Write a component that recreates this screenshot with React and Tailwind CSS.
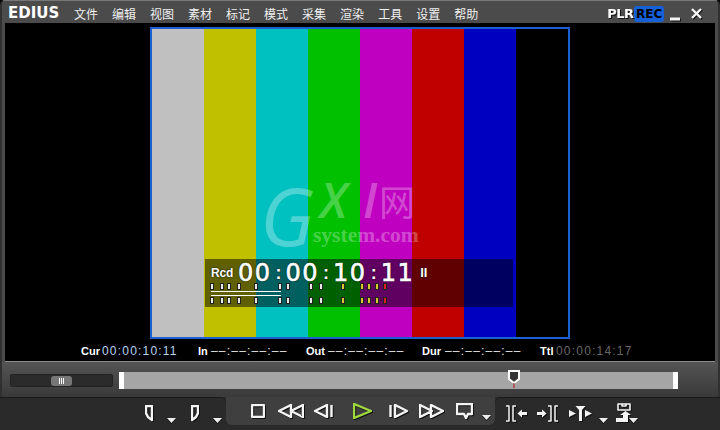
import React from "react";

const menus = ["文件", "编辑", "视图", "素材", "标记", "模式", "采集", "渲染", "工具", "设置", "帮助"];
const bars = ["bg-[#c0c0c0]", "bg-[#c0c000]", "bg-[#00c0c0]", "bg-[#00c000]", "bg-[#c000c0]", "bg-[#c00000]", "bg-[#0000c0]", "bg-black"];
const digits = ["00", "00", "10", "11"];
const ticks = [0, 10, 17, 27, 44, 68, 76, 99, 109, 131, 150, 157, 165, 173];
const stats = [
  { label: "In", width: "w-[108px]", labelWidth: "w-[13px]" },
  { label: "Out", width: "w-[116px]", labelWidth: "w-[22px]" },
  { label: "Dur", width: "w-[118px]", labelWidth: "w-[23px]" },
];

// white line icon with the little dark shadow every button has in the reference
function Icon({ w, h, className = "", color = "#f4f4f4", sw = 2.4, children }) {
  return (
    <svg
      width={w}
      height={h}
      viewBox={`0 0 ${w} ${h}`}
      fill="none"
      stroke={color}
      strokeWidth={sw}
      strokeLinejoin="round"
      className={`shrink-0 drop-shadow-[1px_1px_0_#111] ${className}`}
    >
      {children}
    </svg>
  );
}

function Caret({ className = "" }) {
  return (
    <svg width="9" height="5" viewBox="0 0 9 5" className={`shrink-0 self-end mb-[5px] drop-shadow-[0_1px_0_#111] ${className}`}>
      <path d="M0 0H9L4.5 5Z" fill="#eee" />
    </svg>
  );
}

function Meter() {
  return (
    <div className="relative h-[5px] w-[180px]">
      {ticks.map((x, i) => (
        <span
          key={i}
          style={{ left: x }}
          className={`absolute top-0 h-[5px] w-[2px] shadow-[0_0_0_1px_#222] ${i > 12 ? "bg-[#e02020]" : i > 8 ? "bg-[#d8c830]" : "bg-[#e8e8e8]"}`}
        />
      ))}
    </div>
  );
}

function Overlay() {
  return (
    <div className="absolute left-[53px] top-[230px] flex h-[48px] w-[308px] flex-col bg-black/50 pl-[6px] pt-[2px] text-white">
      <div className="flex h-[23px] items-center [text-shadow:0_0_2px_#000]">
        <span className="mr-[4px] w-[23px] text-[12px] font-bold leading-none tracking-[-0.2px]">Rcd</span>
        {digits.map((d, i) => (
          <React.Fragment key={i}>
            <span className="text-[24px] leading-none tracking-[1.5px] [-webkit-text-stroke:0.6px_white] [font-family:'DejaVu_Sans',sans-serif]">{d}</span>
            {i < 3 && <span className="mx-[4px] text-[18px] font-bold leading-none">:</span>}
          </React.Fragment>
        ))}
        <span className="ml-[6px] text-[13px] font-bold leading-none">II</span>
      </div>
      <Meter />
      <div className="mt-[2px] flex h-[5px] w-[70px] flex-col justify-between">
        <span className="h-[1px] bg-white" />
        <span className="h-[1px] bg-white" />
      </div>
      <div className="mt-[2px]">
        <Meter />
      </div>
    </div>
  );
}

function Watermark() {
  return (
    <div className="absolute left-[113px] top-[153px] h-[70px] w-[160px] text-white/30">
      <span className="absolute left-[-5px] top-[0px] text-[80px] font-medium italic leading-[66px] [font-family:'Open_Sans',sans-serif]">G</span>
      <span className="absolute left-[55px] top-[0px] text-[48px] font-semibold italic leading-[36px] [font-family:'Open_Sans',sans-serif]">X</span>
      <span className="absolute left-[98px] top-[0px] text-[48px] font-semibold italic leading-[36px] [font-family:'Open_Sans',sans-serif]">I</span>
      <span className="absolute left-[114px] top-[0px] text-[36px] leading-[36px] [font-family:'Noto_Sans_CJK_SC',sans-serif]">网</span>
      <span className="absolute left-[48px] top-[43px] whitespace-nowrap text-[21.5px] font-bold leading-[20px] [font-family:'Liberation_Serif',serif]">system.com</span>
    </div>
  );
}

function Stat({ label, width, labelWidth, time = "––:––:––:––", timeClass = "text-[#e4e4e4]" }) {
  return (
    <div className={`flex items-baseline ${width}`}>
      <span className={`text-[11px] font-bold text-white ${labelWidth}`}>{label}</span>
      <span className={`text-[12px] tracking-[1.2px] ${timeClass}`}>{time}</span>
    </div>
  );
}

export default function App() {
  return (
    <div className="flex h-[430px] w-[720px] flex-col overflow-hidden bg-black [font-family:'Liberation_Sans',sans-serif]">
      <div className="flex h-[397px] flex-col rounded-t-[5px] border-x-2 border-t border-x-[#303030] border-t-[#777] bg-[#4b4b4b]">
        {/* title bar */}
        <div className="flex h-[22px] shrink-0 items-center pl-[6px] pt-[3px] text-white">
          <span className="w-[66px] text-[15px] font-bold leading-none [font-family:'DejaVu_Sans',sans-serif]">EDIUS</span>
          <div className="flex gap-[14px] text-[12px] text-[#f0f0f0] [font-family:'Noto_Sans_CJK_SC',sans-serif]">
            {menus.map((m) => (
              <span key={m}>{m}</span>
            ))}
          </div>
          <span className="ml-[129px] w-[27px] text-[13px] font-bold leading-none tracking-[-0.5px] drop-shadow-[1px_1px_0_#111] [font-family:'DejaVu_Sans',sans-serif]">PLR</span>
          <span className="flex h-[16px] w-[30px] items-center justify-center rounded-[3px] bg-[#1660d8] text-[12px] font-bold leading-none text-black [font-family:'DejaVu_Sans',sans-serif]">REC</span>
          <Icon w={10} h={14} className="ml-[6px]" sw={3}>
            <path d="M0 12H10" />
          </Icon>
          <Icon w={11} h={11} className="ml-[11px]">
            <path d="M1 1L10 10M10 1L1 10" />
          </Icon>
        </div>

        {/* monitor */}
        <div className="mx-[3px] flex h-[339px] shrink-0 flex-col items-center border-b border-[#8a8a8a] bg-black pt-[4px]">
          <div className="relative flex h-[312px] w-[420px] border-2 border-[#1c5fd0]">
            {bars.map((c) => (
              <div key={c} className={`h-full w-[52px] ${c}`} />
            ))}
            <Watermark />
            <Overlay />
          </div>
          <div className="mt-[3px] flex h-[18px] w-full items-center pl-[76px]">
            <Stat label="Cur" width="w-[117px]" labelWidth="w-[21px]" time="00:00:10:11" timeClass="text-[#b8d4f0]" />
            {stats.map((s) => (
              <Stat key={s.label} {...s} />
            ))}
            <Stat label="Ttl" width="w-[110px]" labelWidth="w-[16px]" time="00:00:14:17" timeClass="text-[#666]" />
          </div>
        </div>

        {/* sliders */}
        <div className="flex h-[35px] items-center bg-gradient-to-b from-[#545454] to-[#3a3a3a] pl-[8px] pt-[2px]">
          <div className="flex h-[13px] w-[103px] items-center rounded-[2px] border border-[#222] bg-[#2b2b2b] pl-[40px]">
            <div className="flex h-[10px] w-[21px] items-center justify-center gap-[1px] rounded-[3px] bg-[#777]">
              <span className="h-[6px] w-[1px] bg-white" />
              <span className="h-[6px] w-[1px] bg-white" />
              <span className="h-[6px] w-[1px] bg-white" />
            </div>
          </div>
          <div className="relative ml-[6px] flex h-[17px] w-[559px] justify-between bg-[#a5a5a5]">
            <span className="h-full w-[5px] bg-white" />
            <span className="h-full w-[5px] bg-white" />
            <div className="absolute left-[389px] top-[-2px]">
              <svg width="12" height="19" viewBox="0 0 12 19">
                <path d="M1 1H11V9L6 13L1 9Z" fill="#333" stroke="#fff" strokeWidth="2" />
                <path d="M6 13V18" stroke="#b01010" strokeWidth="1" />
              </svg>
            </div>
          </div>
        </div>
      </div>

      {/* transport */}
      <div className="flex h-[33px] bg-[#2a2a2a]">
        <div className="flex h-[31px] w-[226px] items-center rounded-tr-[6px] border-t border-[#1a1a1a] pl-[145px]">
          <Icon w={8} h={17}>
            <path d="M1 1H7V15L3 12L1 8Z" />
          </Icon>
          <Caret className="ml-[14px]" />
          <Icon w={8} h={17} className="ml-[15px]">
            <path d="M7 1H1V15L5 12L7 8Z" />
          </Icon>
          <Caret className="ml-[14px]" />
        </div>
        <div className="flex h-[28px] w-[269px] items-center rounded-b-[6px] bg-[#3f3f3f] pl-[25px]">
          <Icon w={14} h={14}>
            <rect x="1" y="1" width="12" height="12" rx="1" />
          </Icon>
          <Icon w={26} h={14} className="ml-[13px]">
            <path d="M13 1L1 7L13 13ZM25 1L13 7L25 13Z" />
          </Icon>
          <Icon w={20} h={14} className="ml-[9px]">
            <path d="M14 1L2 7L14 13ZM18.5 1V13" />
          </Icon>
          <Icon w={19} h={16} color="#a0d840" className="ml-[20px]">
            <path d="M1 1L18 8L1 15Z" />
          </Icon>
          <Icon w={20} h={14} className="ml-[17px]">
            <path d="M6 1L18 7L6 13ZM1.5 1V13" />
          </Icon>
          <Icon w={25} h={14} className="ml-[10px]">
            <path d="M1 1L13 7L1 13ZM12 1L24 7L12 13Z" />
          </Icon>
          <Icon w={17} h={17} className="ml-[12px]">
            <path d="M1 1H16V11H12L10 15L8 11H1Z" />
          </Icon>
          <Caret className="ml-[9px]" />
        </div>
        <div className="flex h-[31px] flex-1 items-center rounded-tl-[6px] border-t border-[#1a1a1a] pl-[10px]">
          <Icon w={22} h={17} sw={1.5}>
            <path d="M1 1H4V16H1M11 1H8V16H11" />
            <path d="M17 7H22V10H17V12.5L12.5 8.5L17 4.5Z" fill="#f4f4f4" stroke="none" />
          </Icon>
          <Icon w={22} h={17} className="ml-[10px]" sw={1.5}>
            <path d="M11 1H14V16H11M21 1H18V16H21" />
            <path d="M5 7H0V10H5V12.5L9.5 8.5L5 4.5Z" fill="#f4f4f4" stroke="none" />
          </Icon>
          <Icon w={23} h={17} className="ml-[10px]" sw={1.5}>
            <path d="M6.5 1H16.5L13 5V16H10V5Z" fill="#f4f4f4" stroke="none" />
            <path d="M0 5L7 8.5L0 12ZM16 5L23 8.5L16 12Z" fill="#f4f4f4" stroke="none" />
          </Icon>
          <Caret className="ml-[7px]" />
          <Icon w={18} h={20} className="ml-[7px]" sw={1.6}>
            <path d="M3 1H15V7H3ZM7 1V3H11V1" />
            <path d="M1 19V15H8V12H5L10.5 8L16 12H13V19Z" fill="#f4f4f4" stroke="none" />
          </Icon>
          <Caret className="ml-[-4px]" />
        </div>
      </div>
    </div>
  );
}
